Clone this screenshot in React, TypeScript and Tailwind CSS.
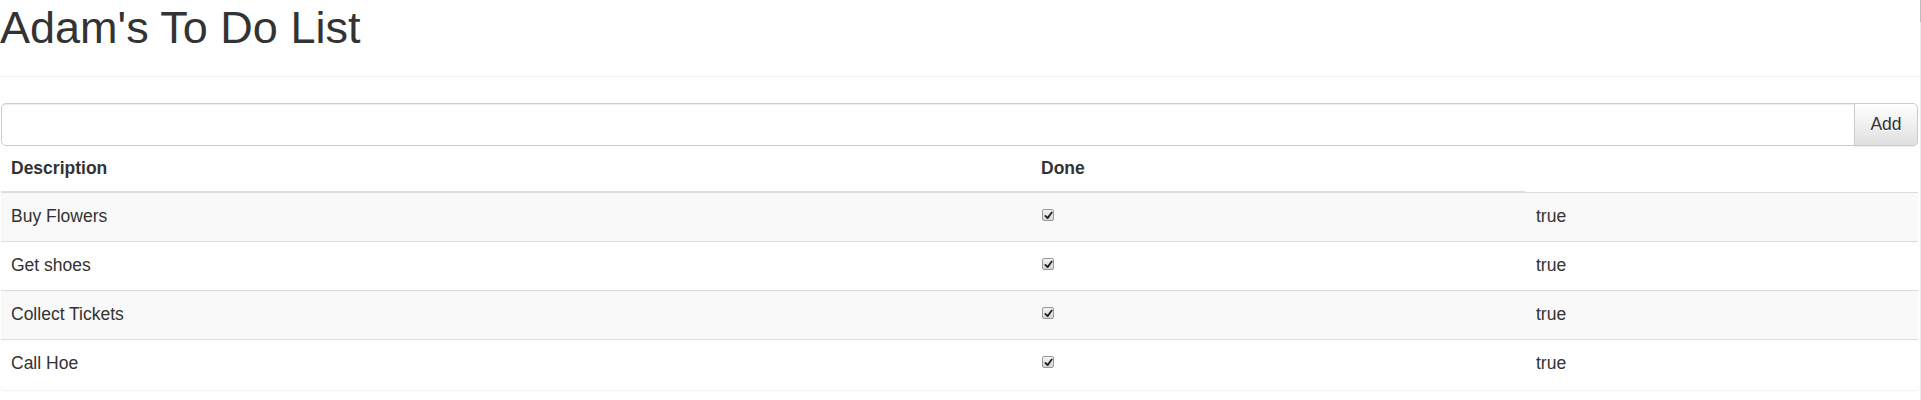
import React from 'react'

type Item = { action: string; done: boolean }

const items: Item[] = [
  { action: 'Buy Flowers', done: true },
  { action: 'Get shoes', done: true },
  { action: 'Collect Tickets', done: true },
  { action: 'Call Hoe', done: true },
]

function Tick() {
  return (
    <span className="flex h-[12px] w-[12px] items-center justify-center rounded-[2px] border border-[#999] bg-gradient-to-b from-[#f4f4f4] to-[#d6d6d6]">
      <svg width="9" height="9" viewBox="0 0 9 9">
        <path d="M1.4 4.9 L3.6 7.1 L7.7 1.5" fill="none" stroke="#222" strokeWidth="1.8" strokeLinecap="round" strokeLinejoin="round" />
      </svg>
    </span>
  )
}

export default function App() {
  return (
    <div className="flex min-h-[400px] w-full bg-white text-[#333] font-['Liberation_Sans',Arial,sans-serif]">
      <div className="flex-1 min-w-0">
        {/* Page header */}
        <div className="h-[77px] border-b border-[#eee] pt-[3px]">
          <h1 className="text-[45px] leading-[50px] font-normal">Adam's To Do List</h1>
        </div>

        {/* Panel */}
        <div className="mt-[25px] mr-[1px] rounded-[4px] border border-transparent shadow-[0_1px_1px_rgba(0,0,0,0.05)]">
          <div className="flex h-[43px]">
            <input
              type="text"
              className="flex-1 min-w-0 rounded-l-[5px] border border-[#ccc] px-[15px] text-[17.5px] outline-none shadow-[inset_0_1px_1px_rgba(0,0,0,0.075)]"
            />
            <button className="-ml-px w-[64px] rounded-r-[5px] border border-[#ccc] bg-gradient-to-b from-white to-[#e0e0e0] text-[17.5px] text-[#333] shadow-[0_1px_1px_rgba(0,0,0,0.075)] [text-shadow:0_1px_0_#fff]">
              Add
            </button>
          </div>

          <div className="text-[17.5px] leading-[25px]">
            <div className="grid grid-cols-[1030px_494px_1fr] h-[47px]">
              <div className="border-b-2 border-[#ddd] px-[10px] pt-[10px] font-bold">Description</div>
              <div className="border-b-2 border-[#ddd] px-[10px] pt-[10px] font-bold">Done</div>
              <div className="border-b border-[#ddd] mt-[1px]" />
            </div>
            {items.map((item, i) => (
              <div
                key={item.action}
                className={`grid grid-cols-[1030px_494px_1fr] h-[49px] ${i < items.length - 1 ? 'border-b border-[#ddd]' : ''} ${i % 2 === 0 ? 'bg-[#f9f9f9]' : 'bg-white'}`}
              >
                <div className="px-[10px] pt-[11px]">{item.action}</div>
                <div className="flex items-start px-[11px] pt-[16px]">
                  <Tick />
                </div>
                <div className="px-[11px] pt-[11px]">{String(item.done)}</div>
              </div>
            ))}
          </div>
        </div>
      </div>
      <div className="w-px shrink-0 bg-[#e8e8e8]">
        <div className="h-[22px] bg-[#bcbcbc]" />
      </div>
    </div>
  )
}
